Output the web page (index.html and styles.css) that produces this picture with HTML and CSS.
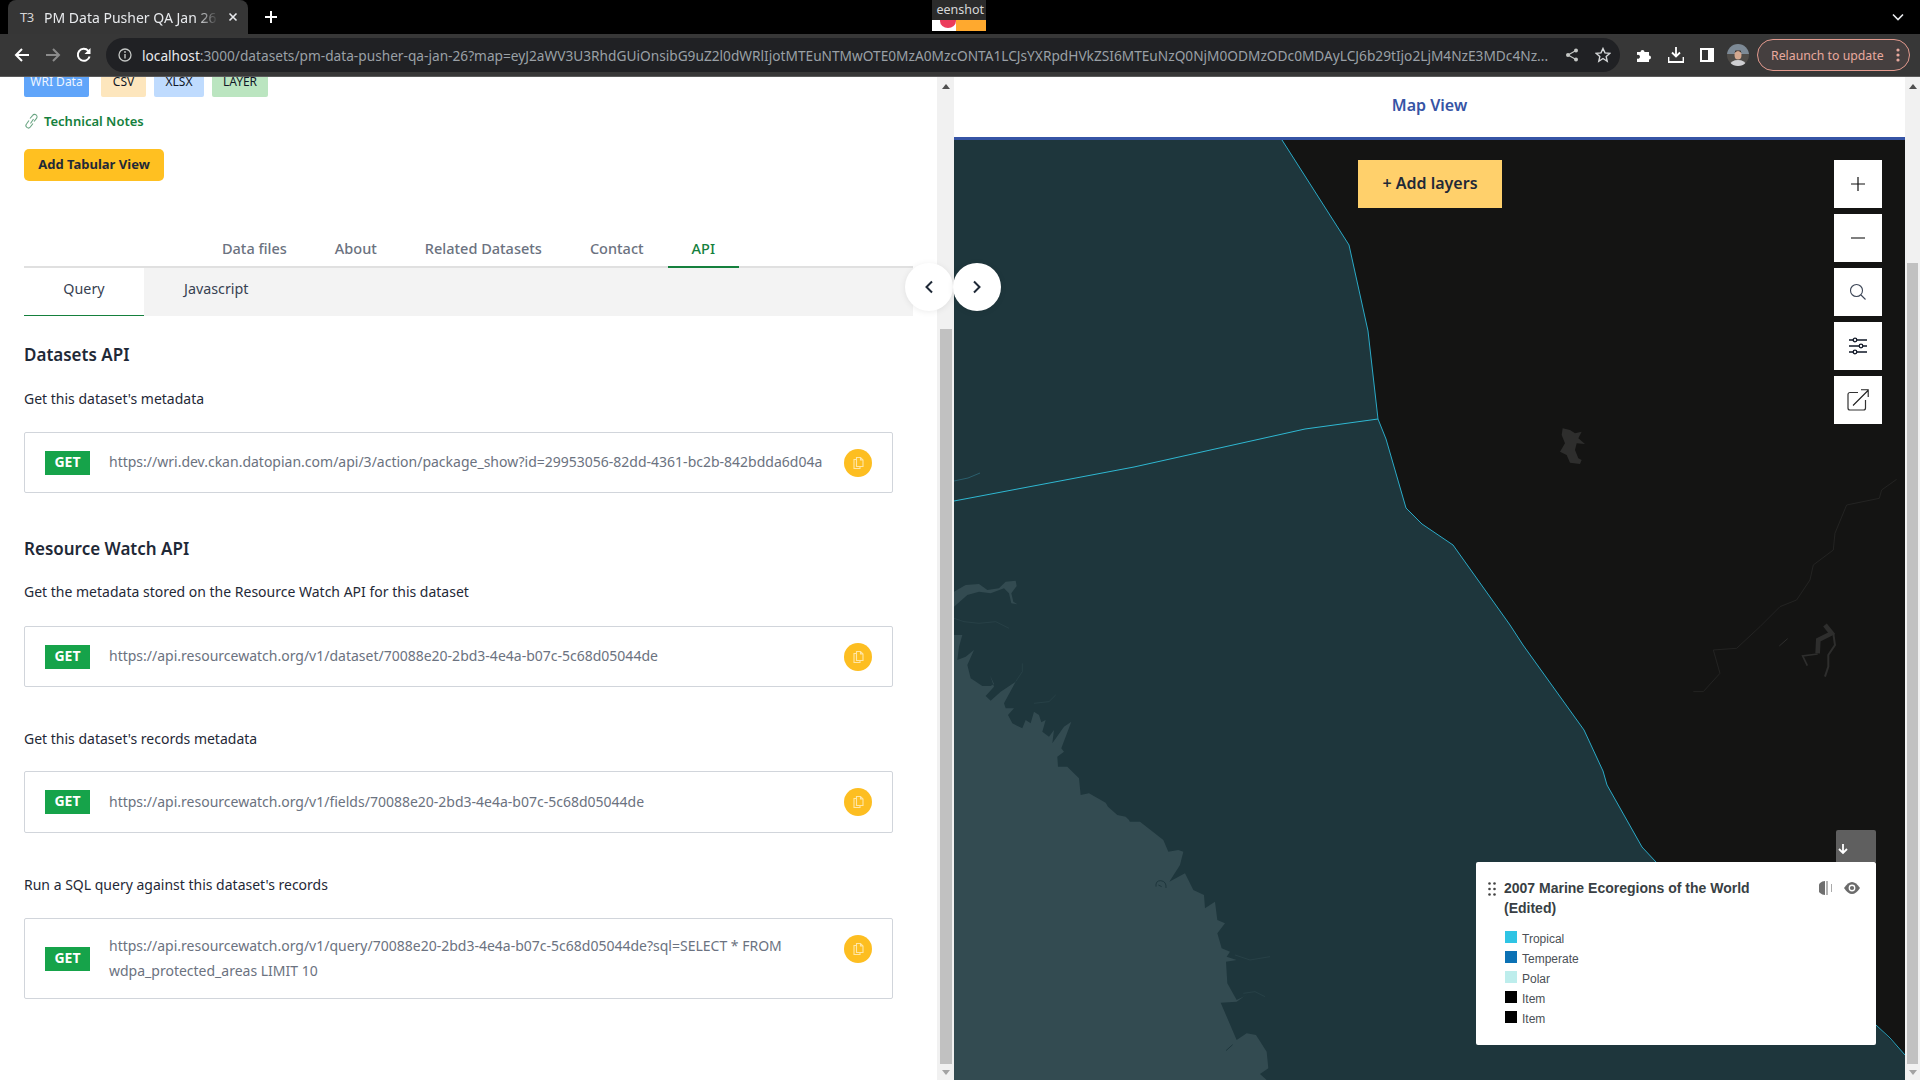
FILE: index.html
```html
<!DOCTYPE html>
<html lang="en">
<head>
<meta charset="utf-8">
<title>PM Data Pusher QA Jan 26</title>
<link rel="stylesheet" href="styles.css">
</head>
<body>
<header class="chrome">
  <div class="tabstrip">
    <div class="tab">
      <span class="favicon">T3</span>
      <span class="tab-title">PM Data Pusher QA Jan 26</span>
      <svg class="tab-close" width="10" height="10" viewBox="0 0 10 10"><path d="M1.500 1.500l7 7M8.500 1.500l-7 7" stroke="#e8eaed" stroke-width="1.600"/></svg>
    </div>
    <svg class="new-tab" width="14" height="14" viewBox="0 0 14 14"><path d="M7 1v12M1 7h12" stroke="#fff" stroke-width="2"/></svg>
    <div class="thumb">
      <div class="thumb-label">eenshot</div>
      <div class="thumb-image"><span class="thumb-dot"></span></div>
    </div>
    <svg class="tabs-menu" width="12" height="8" viewBox="0 0 12 8"><path d="M1 1.500l5 5 5-5" fill="none" stroke="#e8eaed" stroke-width="1.600"/></svg>
  </div>
  <div class="toolbar">
    <svg class="nav-icon" width="16" height="16" viewBox="0 0 16 16"><path d="M15 8H2M8 2L2 8l6 6" fill="none" stroke="#fff" stroke-width="2"/></svg>
    <svg class="nav-icon" width="16" height="16" viewBox="0 0 16 16"><path d="M1 8h13M8 2l6 6-6 6" fill="none" stroke="#8b8b8b" stroke-width="2"/></svg>
    <svg class="nav-icon" width="16" height="16" viewBox="0 0 16 16"><path d="M13.600 9.500A6 6 0 1 1 12.300 3.800" fill="none" stroke="#fff" stroke-width="2"/><path d="M14.500 1v6h-6z" fill="#fff"/></svg>
    <div class="omnibox">
      <svg class="info-icon" width="14" height="14" viewBox="0 0 14 14"><circle cx="7" cy="7" r="6" fill="none" stroke="#c4c7c5" stroke-width="1.300"/><path d="M7 6v4.500" stroke="#c4c7c5" stroke-width="1.400"/><circle cx="7" cy="4" r=".9" fill="#c4c7c5"/></svg>
      <div class="url"><span class="url-host">localhost</span>:3000/datasets/pm-data-pusher-qa-jan-26?map=eyJ2aWV3U3RhdGUiOnsibG9uZ2l0dWRlIjotMTEuNTMwOTE0MzA0MzcONTA1LCJsYXRpdHVkZSI6MTEuNzQ0NjM0ODMzODc0MDAyLCJ6b29tIjo2LjM4NzE3MDc4Nz...</div>
      <svg class="omni-icon" width="14" height="14" viewBox="0 0 14 14"><circle cx="11" cy="2.500" r="2" fill="#c4c7c5"/><circle cx="3" cy="7" r="2" fill="#c4c7c5"/><circle cx="11" cy="11.500" r="2" fill="#c4c7c5"/><path d="M11 2.500L3 7l8 4.500" fill="none" stroke="#c4c7c5" stroke-width="1.200"/></svg>
      <svg class="omni-icon star" width="16" height="16" viewBox="0 0 16 16"><path d="M8 1.500l2 4.400 4.700.5-3.500 3.200 1 4.700L8 11.500l-4.200 2.800 1-4.700L1.300 6.400 6 5.900z" fill="none" stroke="#d5d7d9" stroke-width="1.400"/></svg>
    </div>
    <svg class="tool-icon" width="16" height="16" viewBox="0 0 16 16"><path d="M1 5h3.500a2 2 0 1 1 4 0H13v3.500a2 2 0 1 1 0 4V15H1v-3.500a2 2 0 1 0 0-3.500z" fill="#fff"/></svg>
    <svg class="tool-icon" width="16" height="16" viewBox="0 0 16 16"><path d="M8 0v9M4 5.500l4 4 4-4M.5 10v5h15v-5" fill="none" stroke="#fff" stroke-width="1.800"/></svg>
    <svg class="tool-icon" width="14" height="14" viewBox="0 0 14 14"><rect x="1" y="1" width="12" height="12" fill="none" stroke="#fff" stroke-width="2"/><rect x="8" y="1" width="5" height="12" fill="#fff"/></svg>
    <svg class="avatar" width="22" height="22" viewBox="0 0 22 22"><defs><clipPath id="avatar-clip"><circle cx="11" cy="11" r="11"/></clipPath></defs><g clip-path="url(#avatar-clip)"><rect width="22" height="10" fill="#7d8a96"/><rect y="10" width="22" height="12" fill="#4f4c48"/><ellipse cx="11" cy="21" rx="8" ry="5" fill="#cfcfd2"/><ellipse cx="11" cy="11" rx="3.500" ry="4.500" fill="#d4a88f"/><path d="M7.500 9q3.500-4 7 0l-1-2.500h-5z" fill="#2c2522"/></g></svg>
    <div class="relaunch">
      <span>Relaunch to update</span>
      <svg width="4" height="14" viewBox="0 0 4 14"><circle cx="2" cy="2" r="1.600" fill="#e8a99e"/><circle cx="2" cy="7" r="1.600" fill="#e8a99e"/><circle cx="2" cy="12" r="1.600" fill="#e8a99e"/></svg>
    </div>
  </div>
</header>

<main class="page">
  <section class="left-pane">
    <div class="left-content">
      <div class="tags">
        <span class="tag tag-wri">WRI Data</span>
        <span class="tag tag-csv">CSV</span>
        <span class="tag tag-xlsx">XLSX</span>
        <span class="tag tag-layer">LAYER</span>
      </div>
      <a class="tech-notes">
        <svg width="15" height="16" viewBox="0 0 15 16"><path d="M6.500 10.500l3-4.500M5 7.500L2.500 11a2.400 2.400 0 0 0 3.800 3L9 10.500M6 5.500L8.700 2.300a2.400 2.400 0 0 1 3.800 3L10 8.500" fill="none" stroke="#6aa583" stroke-width="1.100"/></svg>
        <span>Technical Notes</span>
      </a>
      <button class="add-tabular">Add Tabular View</button>

      <nav class="tabs">
        <span class="tab-link">Data files</span>
        <span class="tab-link">About</span>
        <span class="tab-link">Related Datasets</span>
        <span class="tab-link">Contact</span>
        <span class="tab-link active">API</span>
      </nav>
      <div class="subtabs">
        <span class="subtab active">Query</span>
        <span class="subtab">Javascript</span>
      </div>

      <h2 class="api-heading first">Datasets API</h2>
      <p class="api-text">Get this dataset's metadata</p>
      <div class="endpoint">
        <span class="get">GET</span>
        <span class="endpoint-url">https://wri.dev.ckan.datopian.com/api/3/action/package_show?id=29953056-82dd-4361-bc2b-842bdda6d04a</span>
        <span class="copy"><svg width="14" height="14" viewBox="0 0 14 14"><path d="M5.500 1.500h4l2.500 2.500v6.500h-6.500zM9.500 1.500V4H12M5.500 3.500H3v9h6v-2" fill="none" stroke="#ffe6a6" stroke-width="1.100"/></svg></span>
      </div>

      <h2 class="api-heading">Resource Watch API</h2>
      <p class="api-text">Get the metadata stored on the Resource Watch API for this dataset</p>
      <div class="endpoint">
        <span class="get">GET</span>
        <span class="endpoint-url">https://api.resourcewatch.org/v1/dataset/70088e20-2bd3-4e4a-b07c-5c68d05044de</span>
        <span class="copy"><svg width="14" height="14" viewBox="0 0 14 14"><path d="M5.500 1.500h4l2.500 2.500v6.500h-6.500zM9.500 1.500V4H12M5.500 3.500H3v9h6v-2" fill="none" stroke="#ffe6a6" stroke-width="1.100"/></svg></span>
      </div>

      <p class="api-text spaced">Get this dataset's records metadata</p>
      <div class="endpoint tight">
        <span class="get">GET</span>
        <span class="endpoint-url">https://api.resourcewatch.org/v1/fields/70088e20-2bd3-4e4a-b07c-5c68d05044de</span>
        <span class="copy"><svg width="14" height="14" viewBox="0 0 14 14"><path d="M5.500 1.500h4l2.500 2.500v6.500h-6.500zM9.500 1.500V4H12M5.500 3.500H3v9h6v-2" fill="none" stroke="#ffe6a6" stroke-width="1.100"/></svg></span>
      </div>

      <p class="api-text spaced">Run a SQL query against this dataset's records</p>
      <div class="endpoint tall">
        <span class="get">GET</span>
        <span class="endpoint-url">https://api.resourcewatch.org/v1/query/70088e20-2bd3-4e4a-b07c-5c68d05044de?sql=SELECT * FROM wdpa_protected_areas LIMIT 10</span>
        <span class="copy"><svg width="14" height="14" viewBox="0 0 14 14"><path d="M5.500 1.500h4l2.500 2.500v6.500h-6.500zM9.500 1.500V4H12M5.500 3.500H3v9h6v-2" fill="none" stroke="#ffe6a6" stroke-width="1.100"/></svg></span>
      </div>
    </div>
    <div class="scrollbar left-scroll">
      <span class="sb-up"></span>
      <span class="sb-thumb"></span>
      <span class="sb-down"></span>
    </div>
    <button class="round-btn round-left"><svg width="10" height="14" viewBox="0 0 10 14"><path d="M8 1.500L2.500 7 8 12.500" fill="none" stroke="#1f2937" stroke-width="2"/></svg></button>
    <button class="round-btn round-right"><svg width="10" height="14" viewBox="0 0 10 14"><path d="M2 1.500L7.500 7 2 12.500" fill="none" stroke="#1f2937" stroke-width="2"/></svg></button>
  </section>

  <section class="map-pane">
    <div class="map-column">
      <div class="map-title">Map View</div>
      <div class="map-canvas">
        <svg class="map-art" viewBox="954 140 951 940" preserveAspectRatio="none">
          <rect x="954" y="140" width="951" height="940" fill="#141413"/>
          <polygon fill="#1e363c" points="954,140 1282,140 1349,245 1368,331 1378,419 1386,439 1406,508 1422,524 1453,545 1510,625 1523,645 1584,730 1603,771 1607,785 1642,847 1656,862 1876,1025 1905,1055 1905,1080 954,1080"/>
          <polyline fill="none" stroke="#2aa9c6" stroke-width="1" points="1282,140 1349,245 1368,331 1378,419 1386,439 1406,508 1422,524 1453,545 1510,625 1523,645 1584,730 1603,771 1607,785 1642,847 1656,862"/>
          <polyline fill="none" stroke="#2aa9c6" stroke-width="1" points="1876,1025 1890,1038 1905,1055"/>
          <polyline fill="none" stroke="#2fb8d2" stroke-width="1" points="954,501 1134,467 1305,429 1378,419"/>
          <polyline fill="none" stroke="#2b5f6d" stroke-width="1" points="954,481 968,478 980,473"/>

          <g class="land" transform="translate(954 560) scale(.3333)">
            <polygon points="0,95 35,75 75,72 100,90 135,85 155,65 185,62 188,78 172,100 178,125 190,133 172,130 165,100 150,85 110,100 75,95 40,105 0,140"/>
            <polygon points="0,225 25,225 15,260 10,300 35,290 60,270 40,315 50,355 85,378 110,378 120,372 108,345 120,380 95,408 110,422 140,395 185,365 150,430 155,445 180,445 162,465 175,490 205,505 215,480 230,490 240,455 255,465 262,487 275,480 265,515 285,530 300,510 295,550 330,500 352,485 322,565 330,575 310,590 312,620 340,620 375,655 380,705 405,700 455,728 462,740 490,765 515,770 525,780 530,790 530,1560 0,1560"/>
            <polyline class="channel" points="0,175 30,185 75,190 125,185 165,205"/>
            <polyline class="channel" points="185,365 205,335 205,310"/>
            <polyline class="channel" points="240,430 285,425 305,405"/>
          </g>
          <g class="land" transform="translate(1130 820) scale(.3333)">
            <polygon points="0,5 30,5 100,60 115,95 145,90 160,95 150,135 118,185 165,160 190,210 222,225 225,265 255,245 262,300 285,310 262,340 275,385 300,395 290,410 320,420 288,425 292,490 320,540 340,530 355,520 320,545 272,548 320,660 350,640 378,645 410,695 415,745 390,762 410,780 0,780"/>
            <polyline class="channel" points="340,520 375,515 405,530"/>
            <polyline class="channel" points="315,405 360,420 420,410"/>
          </g>
          <g class="sea-mark" transform="translate(1130 820) scale(.3333)">
            <path d="M78 200q-2-18 14-18q18 2 16 22M85 195l10 5"/>
            <path d="M288 692l20-18"/>
          </g>
          <g transform="translate(1520 400) scale(.3333)">
            <polygon class="lake" points="128,85 150,90 165,100 185,95 175,115 195,132 170,130 165,150 175,175 185,180 180,192 150,188 140,165 120,155 135,130 125,105"/>
            <polyline class="lake-line" stroke-width="14" points="915,675 935,700 895,720 893,760"/>
            <polyline class="lake-line" stroke-width="5" points="893,762 848,768 862,797"/>
            <polyline class="lake-line" stroke-width="6" points="940,700 945,735 925,765 925,800 915,830"/>
            <polyline class="lake-line" stroke-width="3" points="778,738 803,716"/>
            <polyline class="river" points="1130,238 1085,270 1078,295 980,315 945,400 940,450 880,495 870,540 830,600 780,620 720,680 650,745 580,750 600,820 550,875 520,875"/>
          </g>
        </svg>
        <button class="add-layers">+ Add layers</button>
        <div class="map-controls">
          <button class="map-ctrl"><svg width="16" height="16" viewBox="0 0 16 16"><path d="M8 1v14M1 8h14" stroke="#111" stroke-width="1.200"/></svg></button>
          <button class="map-ctrl"><svg width="16" height="16" viewBox="0 0 16 16"><path d="M1 8h14" stroke="#555" stroke-width="1.500"/></svg></button>
          <button class="map-ctrl"><svg width="18" height="18" viewBox="0 0 18 18"><circle cx="7.500" cy="7.500" r="6" fill="none" stroke="#3d4657" stroke-width="1.100"/><path d="M12 12l4.500 4.500" stroke="#3d4657" stroke-width="1.100"/></svg></button>
          <button class="map-ctrl"><svg width="20" height="18" viewBox="0 0 20 18"><path d="M1 3h18M1 9h18M1 15h18" stroke="#111827" stroke-width="1.300"/><circle cx="7" cy="3" r="1.800" fill="#fff" stroke="#111827" stroke-width="1.300"/><circle cx="13" cy="9" r="1.800" fill="#fff" stroke="#111827" stroke-width="1.300"/><circle cx="7" cy="15" r="1.800" fill="#fff" stroke="#111827" stroke-width="1.300"/></svg></button>
          <button class="map-ctrl"><svg width="24" height="24" viewBox="0 0 24 24"><path d="M12 4.500H4a2 2 0 0 0-2 2V20a2 2 0 0 0 2 2h13.500a2 2 0 0 0 2-2v-8" fill="none" stroke="#333" stroke-width="1.200"/><path d="M7 17.500L22 2.500M15 1.800h7.200V9" fill="none" stroke="#222" stroke-width="1.100"/></svg></button>
        </div>
        <div class="legend-wrap">
          <button class="legend-toggle"><svg width="12" height="12" viewBox="0 0 12 12"><path d="M6 1v9M2 6l4 4 4-4" fill="none" stroke="#fff" stroke-width="1.800"/></svg></button>
          <div class="legend">
            <svg class="legend-drag" width="8" height="14" viewBox="0 0 8 14"><g fill="#444"><circle cx="1.500" cy="1.500" r="1.300"/><circle cx="6.500" cy="1.500" r="1.300"/><circle cx="1.500" cy="7" r="1.300"/><circle cx="6.500" cy="7" r="1.300"/><circle cx="1.500" cy="12.500" r="1.300"/><circle cx="6.500" cy="12.500" r="1.300"/></g></svg>
            <div class="legend-body">
              <div class="legend-head">
                <h3 class="legend-title">2007 Marine Ecoregions of the World (Edited)</h3>
                <svg class="legend-action" width="14" height="14" viewBox="0 0 14 14"><path d="M6 0a7 7 0 0 0 0 14z" fill="#6f6f6f"/><path d="M8 0v14" stroke="#8c8c8c" stroke-width="1.300"/><path d="M12.500 3v8" stroke="#aaa" stroke-width="1"/></svg>
                <svg class="legend-action eye" width="16" height="12" viewBox="0 0 16 12"><path d="M0 6q8-12 16 0q-8 12-16 0z" fill="#6b6b6b"/><circle cx="8" cy="6" r="3.400" fill="#fff"/><circle cx="8" cy="6" r="2.100" fill="#6b6b6b"/></svg>
              </div>
              <ul class="legend-items">
                <li><span class="swatch swatch-tropical"></span>Tropical</li>
                <li><span class="swatch swatch-temperate"></span>Temperate</li>
                <li><span class="swatch swatch-polar"></span>Polar</li>
                <li><span class="swatch swatch-item"></span>Item</li>
                <li><span class="swatch swatch-item"></span>Item</li>
              </ul>
            </div>
          </div>
        </div>
      </div>
    </div>
    <div class="scrollbar right-scroll">
      <span class="sb-up"></span>
      <span class="sb-thumb"></span>
      <span class="sb-down"></span>
    </div>
  </section>
</main>
</body>
</html>
```

FILE: styles.css
```css
* { box-sizing: border-box; }
html, body { margin: 0; padding: 0; height: 100%; overflow: hidden; }
body {
  width: 1920px; height: 1080px;
  display: flex; flex-direction: column;
  font-family: "Noto Sans", "Open Sans", sans-serif;
  background: #fff;
}
button { font-family: inherit; border: 0; cursor: pointer; }
svg { display: block; flex: none; }

/* browser chrome */
.chrome { flex: none; height: 77px; display: flex; flex-direction: column; }
.tabstrip { height: 34px; background: #000; display: flex; align-items: center; position: relative; }
.tab {
  width: 240px; height: 34px; margin-left: 8px; padding: 0 12px 0 12px;
  background: #363636; border-radius: 8px 8px 0 0;
  display: flex; align-items: center; color: #e8eaed; font-size: 14px;
}
.favicon { width: 24px; font-size: 13px; color: #d5d5d5; flex: none; letter-spacing: -.5px; }
.tab-title {
  width: 174px; flex: none; white-space: nowrap; overflow: hidden;
  -webkit-mask-image: linear-gradient(90deg, #000 88%, transparent);
          mask-image: linear-gradient(90deg, #000 88%, transparent);
}
.tab-close { margin-left: 10px; }
.new-tab { margin-left: 16px; }
.thumb { position: absolute; left: 932px; top: 0; width: 54px; height: 31px; background: #ffa92e; }
.thumb-label { height: 20px; background: #2b2b2b; color: #d8d8d8; font-size: 12.500px; line-height: 20px; white-space: nowrap; overflow: hidden; text-align: right; padding-right: 2px; }
.thumb-image { height: 11px; background: linear-gradient(90deg, #fff 0 24px, #ffa92e 24px); position: relative; overflow: hidden; }
.thumb-dot { position: absolute; left: 8px; top: -6px; width: 16px; height: 14px; border-radius: 50%; background: #ec3c5b; }
.tabs-menu { position: absolute; left: 1892px; top: 13px; }

.toolbar {
  height: 43px; background: #373737; border-bottom: 1px solid #5a5a5a;
  display: flex; align-items: center; padding-left: 14px;
}
.nav-icon { margin-right: 15px; }
.omnibox {
  width: 1514px; height: 34px; margin-left: -1px; padding: 0 9px 0 12px; background: #202124; border-radius: 17px;
  display: flex; align-items: center;
}
.info-icon { margin-right: 10px; }
.url { width: 1411px; flex: none; color: #9aa0a6; font-size: 13.700px; white-space: nowrap; overflow: hidden; }
.url-host { color: #e8eaed; }
.omni-icon { margin-left: 12px; }
.omni-icon.star { margin-left: 16px; }
.tool-icon { margin-left: 16px; }
.avatar { margin-left: 13px; }
.relaunch {
  margin-left: 8px; width: 153px; height: 32px; padding: 0 9px 0 13px;
  border: 1px solid #e39a8e; border-radius: 16px; background: #453f3f;
  display: flex; align-items: center; justify-content: space-between;
  color: #e8a99e; font-size: 12.300px; white-space: nowrap;
}

/* page split */
.page { flex: 1; display: flex; min-height: 0; position: relative; }
.left-pane { width: 954px; flex: none; display: flex; position: relative; }
.left-content { width: 937px; flex: none; padding-left: 24px; overflow: hidden; }

.scrollbar { flex: none; background: #f1f1f1; display: flex; flex-direction: column; align-items: center; }
.left-scroll { width: 17px; padding: 7px 0 5px; }
.right-scroll { width: 15px; padding: 7px 0 5px; }
.sb-up { width: 0; height: 0; border: 4px solid transparent; border-top: 0; border-bottom: 5px solid #505050; }
.sb-down { width: 0; height: 0; border: 4px solid transparent; border-bottom: 0; border-top: 5px solid #a3a3a3; margin-top: 6px; }
.sb-thumb { background: #c1c1c1; margin-top: auto; }
.left-scroll .sb-thumb { width: 12px; height: 735px; }
.right-scroll .sb-thumb { width: 11px; height: 801px; }

/* tags */
.tags { display: flex; margin-top: -4px; height: 24px; }
.tag {
  height: 24px; border-radius: 2px; font-size: 12px; line-height: 18px; text-align: center;
  color: #111827; margin-right: 8px;
}
.tag-wri { width: 65px; background: #60a5fa; color: #eff6ff; margin-right: 12px; }
.tag-csv { width: 45px; background: #fde6bd; }
.tag-xlsx { width: 50px; background: #bfdbfe; }
.tag-layer { width: 56px; background: #bbe5c0; }

.tech-notes {
  display: flex; align-items: center; gap: 5px; margin-top: 14px; height: 20px;
  color: #15803d; font-size: 13px; font-weight: 600;
}
.add-tabular {
  display: block; margin-top: 18px; width: 140px; height: 32px; padding: 0 0 3px;
  background: #ffc021; border-radius: 5px; color: #1f2937; font-size: 13px; font-weight: 700;
}

/* tabs */
.tabs { margin-top: 50px; width: 889px; height: 37px; border-bottom: 2px solid #e0e0e0; display: flex; justify-content: center; }
.tab-link {
  height: 37px; padding: 0 24px; line-height: 34px; font-size: 14.500px; color: #6b7280; font-weight: 500; white-space: nowrap;
}
.tab-link.active { color: #15803d; border-bottom: 2px solid #15803d; }
.subtabs { width: 889px; height: 48px; background: #f3f3f3; display: flex; }
.subtab { height: 48px; padding: 0 40px; line-height: 42px; font-size: 14.300px; color: #374151; }
.subtab.active { background: #fff; border-bottom: 1px solid #15803d; width: 120px; text-align: center; padding: 0; }

/* api content */
.api-heading { margin: 44px 0 0; font-size: 17px; line-height: 24px; font-weight: 600; color: #1f2937; }
.api-heading.first { margin-top: 27px; }
.api-text { margin: 21px 0 0; font-size: 14px; line-height: 20px; color: #1f2937; }
.api-text.spaced { margin-top: 42px; }
.api-heading.first + .api-text { margin-top: 22px; }
.api-heading.first + .api-text + .endpoint { margin-top: 23px; }
.endpoint {
  width: 869px; height: 61px; margin-top: 24px; padding: 0 20px;
  border: 1px solid #d1d5db; border-radius: 2px;
  display: flex; align-items: center;
}
.endpoint.tight { height: 62px; margin-top: 22px; }
.endpoint.tall { height: 81px; margin-top: 23px; }
.get {
  flex: none; width: 45px; height: 24px; background: #16a34a; color: #fff;
  font-size: 14px; font-weight: 700; line-height: 22px; text-align: center;
}
.endpoint-url { margin-left: 19px; width: 730px; font-size: 14px; line-height: 24.500px; color: #6b7280; }
.copy {
  flex: none; margin-left: auto; width: 28px; height: 28px; border-radius: 50%; background: #fdbe21;
  display: flex; align-items: center; justify-content: center;
}
.endpoint.tall .copy { margin-bottom: 19px; }

/* round toggles */
.round-btn {
  position: absolute; top: 186px; width: 48px; height: 48px; border-radius: 50%; background: #fff;
  display: flex; align-items: center; justify-content: center; padding: 0;
  box-shadow: 0 1px 6px rgba(0,0,0,.08);
}
.round-left { left: 905px; }
.round-right { left: 953px; z-index: 2; }

/* map */
.map-pane { flex: 1; display: flex; min-width: 0; }
.map-column { flex: 1; display: flex; flex-direction: column; min-width: 0; }
.map-title {
  height: 63px; flex: none; border-bottom: 3px solid #3654a5; background: #fff;
  color: #3654a5; font-size: 16px; font-weight: 600; line-height: 56px; text-align: center;
}
.map-canvas { flex: 1; position: relative; overflow: hidden; background: #141413; }
.map-art { position: absolute; inset: 0; width: 100%; height: 100%; }
.land polygon { fill: #334b51; }
.channel { fill: none; stroke: #2c464c; stroke-width: 2; }
.sea-mark path { fill: none; stroke: #1e363c; stroke-width: 3; }
.lake { fill: #2e2e2d; }
.lake-line { fill: none; stroke: #2e2e2d; }
.river { fill: none; stroke: #262625; stroke-width: 2.500; }
.add-layers {
  position: absolute; left: 404px; top: 20px; width: 144px; height: 48px; padding: 0 0 2px;
  background: #ffd06b; color: #1f2937; font-size: 16px; font-weight: 600;
}
.map-controls { position: absolute; left: 880px; top: 20px; display: flex; flex-direction: column; gap: 6px; }
.map-ctrl { width: 48px; height: 48px; background: #fff; padding: 0; display: flex; align-items: center; justify-content: center; }

.legend-wrap { position: absolute; left: 522px; top: 690px; width: 400px; font-family: "Liberation Sans", Arial, sans-serif; }
.legend-toggle {
  display: flex; margin-left: 360px; width: 40px; height: 32px; padding: 13px 0 0 1px;
  background: #5f5f5f; border-radius: 2px 2px 0 0;
}
.legend {
  height: 183px; background: #fff; border-radius: 2px; padding: 16px 16px 0 12px; display: flex; gap: 8px;
}
.legend-drag { margin-top: 4px; }
.legend-body { flex: 1; }
.legend-head { display: flex; align-items: flex-start; }
.legend-title { flex: 1; margin: 0; padding-right: 35px; font-size: 14px; line-height: 20px; font-weight: 700; color: #393f44; }
.legend-action { margin-top: 3px; }
.legend-action.eye { margin-left: 11px; margin-top: 4px; }
.legend-items { list-style: none; margin: 8px 0 0; padding: 0; }
.legend-items li { height: 20px; display: flex; align-items: flex-start; font-size: 12px; line-height: 26px; color: #4b5056; }
.swatch { width: 12px; height: 12px; margin: 5px 5px 0 1px; flex: none; }
.swatch-tropical { background: #2fc4e4; }
.swatch-temperate { background: #0b71b4; }
.swatch-polar { background: #bdedec; }
.swatch-item { background: #000; }
```
